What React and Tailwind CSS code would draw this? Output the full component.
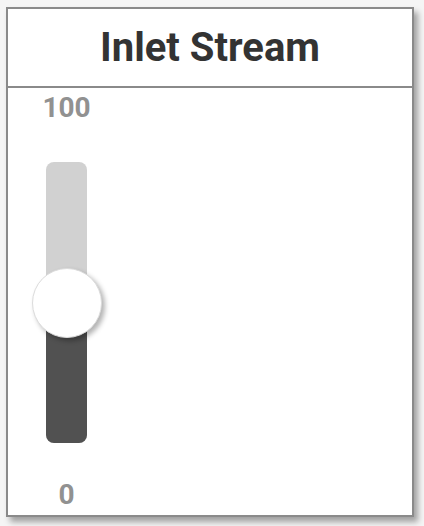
export default function App() {
  const value = 50

  return (
    <div className="min-h-[526px] bg-[#f5f5f5] pt-[7px] pl-[6px] font-['Roboto',sans-serif]">
      <div className="w-[408px] h-[510px] bg-white border-2 border-[#8a8a8a] shadow-[4px_5px_6px_rgba(0,0,0,0.35)] flex flex-col">
        <div className="h-[79px] border-b-2 border-[#8a8a8a] flex items-center justify-center">
          <h1 className="text-[40px] font-bold text-[#333333] leading-none">Inlet Stream</h1>
        </div>

        <div className="w-[117px] flex flex-col items-center pt-[6px]">
          <span className="text-[28px] font-bold text-[#919191] leading-none h-[28px]">100</span>

          <div className="relative mt-[40px] w-[41px] h-[281px] rounded-[8px] bg-[#d1d1d1]">
            <div
              className="absolute left-0 right-0 bottom-0 rounded-b-[8px] bg-[#515151]"
              style={{ height: `${value}%` }}
            />
            <div
              className="absolute left-1/2 w-[70px] h-[70px] -ml-[35px] -mb-[35px] rounded-full bg-white border border-[#dcdcdc] shadow-[3px_3px_5px_rgba(0,0,0,0.3)]"
              style={{ bottom: `${value}%` }}
            />
          </div>

          <span className="mt-[38px] text-[28px] font-bold text-[#919191] leading-none h-[28px]">0</span>
        </div>
      </div>
    </div>
  )
}
